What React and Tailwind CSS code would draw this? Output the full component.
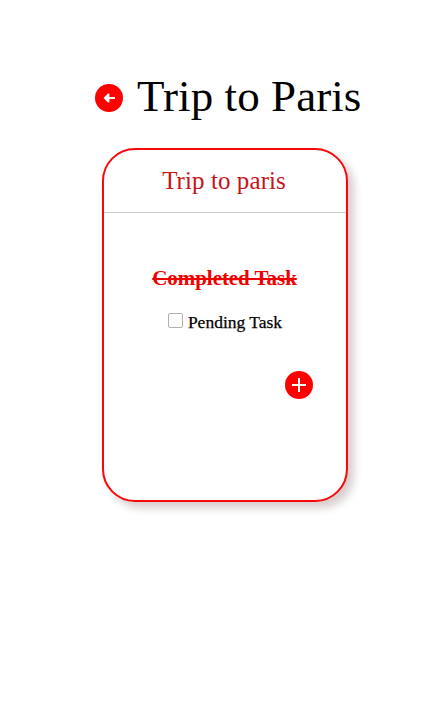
const serif = "font-['Liberation_Serif','Times_New_Roman',serif]";

function BackButton() {
  return (
    <button aria-label="Back" className="size-7 shrink-0 rounded-full bg-[#ff0000]">
      <svg viewBox="0 0 28 28" className="size-7" fill="white">
        <path d="M8.5 14 13 9.5h1.4V13H20v2h-5.6v3.5H13z" />
      </svg>
    </button>
  );
}

function AddButton() {
  return (
    <button aria-label="Add task" className="size-7 rounded-full bg-[#ff0000]">
      <svg viewBox="0 0 28 28" className="size-7" fill="none" stroke="white" strokeWidth="2">
        <path d="M7 14h14M14 7v14" />
      </svg>
    </button>
  );
}

export default function App() {
  return (
    <main className={`${serif} h-[711px] w-full overflow-hidden bg-white pt-[70px] text-black`}>
      <header className="flex h-[54px] items-center gap-3.5 pl-[95px] pt-0.5">
        <BackButton />
        <h1 className="whitespace-nowrap pb-1 text-[45px] leading-[50px] tracking-[0.08px]">Trip to Paris</h1>
      </header>
      <section className="ml-[102px] mt-6 flex h-[354px] w-[246px] flex-col rounded-[33px] border-2 border-[#f80808] bg-white shadow-[6px_6px_8px_rgba(60,0,10,0.2)]">
        <h2 className="flex h-[63px] items-center justify-center border-b border-[#cccccc] pr-0.5 text-[25px] tracking-[0.08px] text-[#c81418]">
          Trip to paris
        </h2>
        <ul className="flex flex-col items-center pt-[53px]">
          <li className="h-6 whitespace-nowrap pr-px text-[21px] font-bold leading-6 tracking-[-0.05px] text-[#f00000] line-through">
            Completed Task
          </li>
          <li className="mt-5 flex h-6 items-center gap-[5px]">
            <input type="checkbox" className="mb-[3px] size-[15px] appearance-none rounded-[2px] border border-[#b0b0b0] bg-white" />
            <span className="whitespace-nowrap text-[17.5px] leading-6 [-webkit-text-stroke:0.25px_black]">Pending Task</span>
          </li>
        </ul>
        <div className="mt-[37px] flex justify-end pr-[33px]">
          <AddButton />
        </div>
      </section>
    </main>
  );
}
